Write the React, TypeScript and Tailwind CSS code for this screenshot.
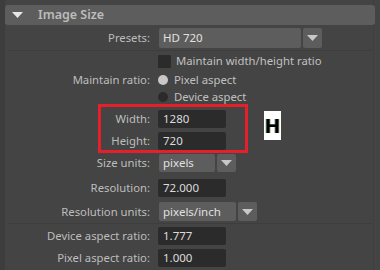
import React from 'react';

const font = { fontFamily: '"Noto Sans", "Open Sans", sans-serif' };

function Caret() {
  return (
    <svg width="11" height="6" viewBox="0 0 11 6">
      <path d="M0 0 L11 0 L5.5 6 Z" fill="#c8c8c8" />
    </svg>
  );
}

function Label({ children }: { children?: React.ReactNode }) {
  return (
    <div className="w-[145px] shrink-0 text-right text-[11.3px] leading-none text-[#bdbdbd]">
      {children}
    </div>
  );
}

function Field({ value }: { value: string }) {
  return (
    <div className="ml-[8px] flex h-full w-[68px] items-center rounded-[2px] bg-[#2b2b2b] pl-[5px] text-[11.5px] text-[#dcdcdc]">
      {value}
    </div>
  );
}

function Dropdown({ value, width }: { value: string; width: string }) {
  return (
    <div className="ml-[9px] flex h-full items-stretch gap-[2px]">
      <div className={`flex items-center rounded-[2px] bg-[#5d5d5d] pl-[4px] text-[11.5px] text-[#e0e0e0] ${width}`}>
        {value}
      </div>
      <div className="flex w-[19px] items-center justify-center rounded-[2px] bg-[#5d5d5d]">
        <Caret />
      </div>
    </div>
  );
}

export default function App() {
  return (
    <div className="flex h-[270px] w-[380px] overflow-hidden bg-[#444444]" style={font}>
      <div className="w-[5px] shrink-0 bg-[#3d3d3d]" />
      <div className="flex w-[369px] flex-col border-r border-[#3e3e3e]">
        {/* header */}
        <div className="mt-[5px] flex h-[20px] w-[370px] items-center rounded-[3px] bg-[#5d5d5d]">
          <svg className="ml-[7px]" width="11" height="6" viewBox="0 0 11 6">
            <path d="M0 0 L11 0 L5.5 6 Z" fill="#e6e6e6" />
          </svg>
          <span className="ml-[15px] text-[12.5px] font-semibold text-[#bcbcbc]">Image Size</span>
        </div>

        <div className="mt-[3px] flex h-[20px] items-center">
          <Label>Presets:</Label>
          <Dropdown value="HD 720" width="w-[142px]" />
        </div>

        <div className="ml-[3px] mt-[2px] h-px w-[364px] bg-[#3d3d3d]" />

        <div className="mt-[4px] flex h-[13px] items-center">
          <Label />
          <div className="ml-[8px] h-[13px] w-[13px] rounded-[1px] bg-[#2b2b2b]" />
          <span className="ml-[5px] text-[11.3px] text-[#c0c0c0]">Maintain width/height ratio</span>
        </div>

        <div className="mt-[6px] flex h-[12px] items-center">
          <Label>Maintain ratio:</Label>
          <div className="ml-[8px] h-[10px] w-[10px] rounded-full bg-[#c8c8c8]" />
          <span className="ml-[6px] text-[11.3px] text-[#c0c0c0]">Pixel aspect</span>
        </div>

        <div className="mt-[5px] flex h-[12px] items-center">
          <Label />
          <div className="ml-[8px] h-[10px] w-[10px] rounded-full bg-[#2b2b2b]" />
          <span className="ml-[6px] text-[11.3px] text-[#c0c0c0]">Device aspect</span>
        </div>

        <div className="relative">
          <div className="mt-[7px] flex h-[18px] items-center">
            <Label>Width:</Label>
            <Field value="1280" />
          </div>
          <div className="mt-[4px] flex h-[18px] items-center">
            <Label>Height:</Label>
            <Field value="720" />
          </div>
          <div className="absolute left-[93px] top-[1px] h-[49px] w-[150px] border-[3px] border-[#e5202a]" />
          <div className="absolute left-[259px] top-[8px] flex h-[29px] w-[17px] items-center justify-center bg-white text-[20px] font-bold text-black [text-shadow:-1px_0_#2a9fd8,1px_0_#e8922a]" style={{ fontFamily: '"Liberation Sans", Arial, sans-serif' }}>
            H
          </div>
        </div>

        <div className="mt-[4px] flex h-[18px] items-center">
          <Label>Size units:</Label>
          <Dropdown value="pixels" width="w-[56px]" />
        </div>

        <div className="mt-[7px] flex h-[18px] items-center">
          <Label>Resolution:</Label>
          <Field value="72.000" />
        </div>

        <div className="mt-[5px] flex h-[19px] items-center">
          <Label>Resolution units:</Label>
          <Dropdown value="pixels/inch" width="w-[77px]" />
        </div>

        <div className="ml-[3px] mt-[2px] h-px w-[364px] bg-[#3d3d3d]" />

        <div className="mt-[3px] flex h-[18px] items-center">
          <Label>Device aspect ratio:</Label>
          <Field value="1.777" />
        </div>

        <div className="mt-[4px] flex h-[18px] items-center">
          <Label>Pixel aspect ratio:</Label>
          <Field value="1.000" />
        </div>
      </div>
    </div>
  );
}
